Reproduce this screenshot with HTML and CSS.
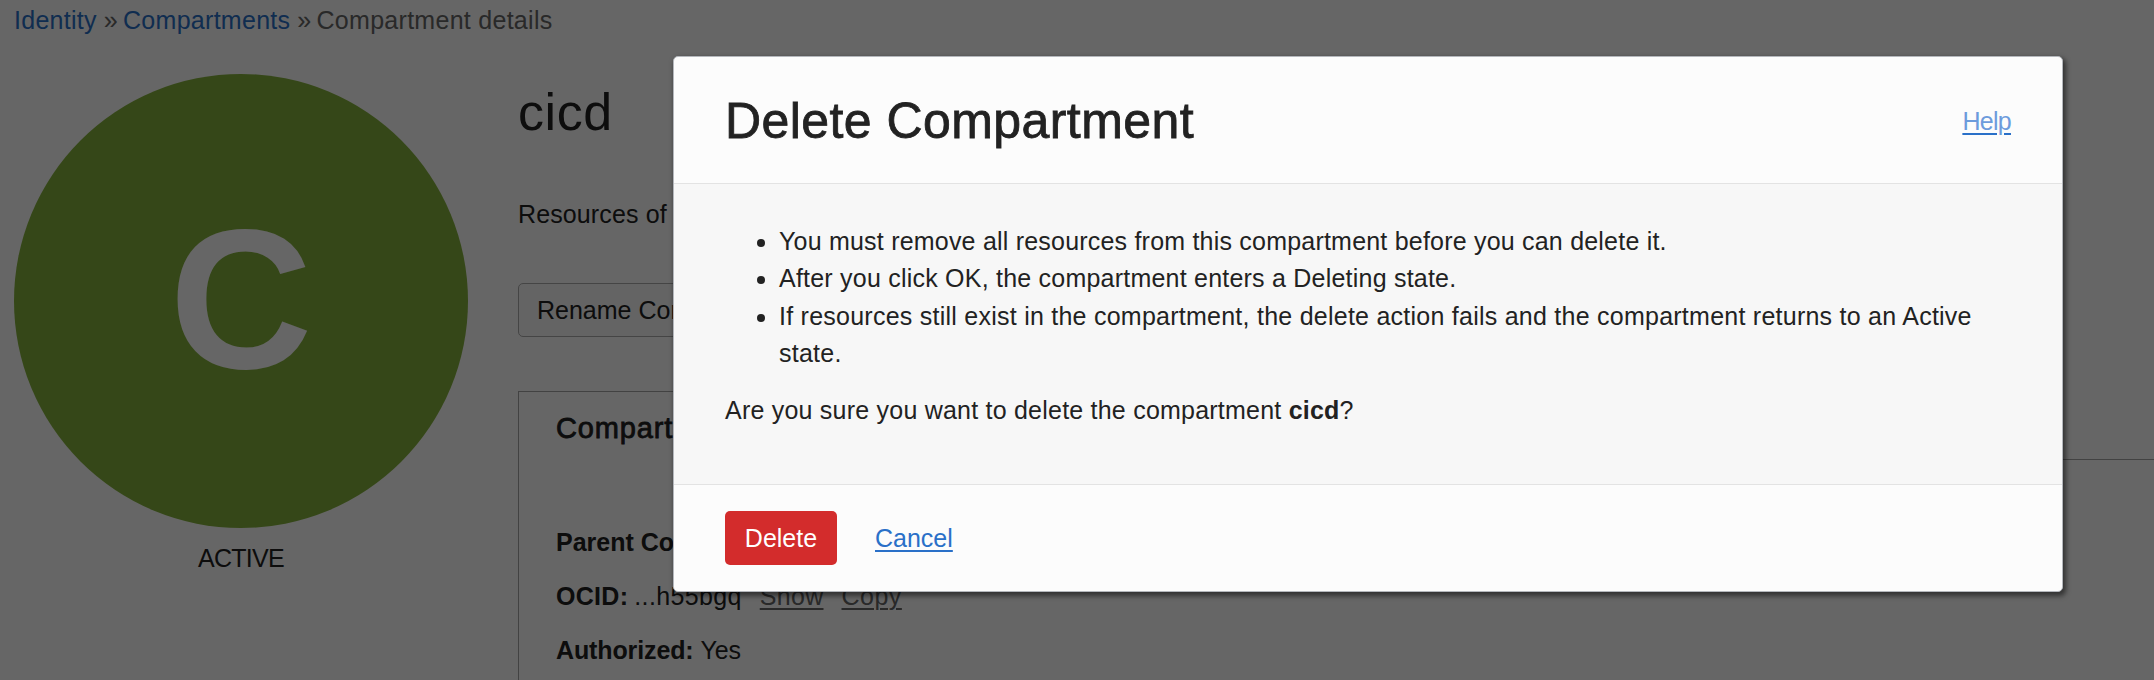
FILE: index.html
```html
<!DOCTYPE html>
<html lang="en">
<head>
<meta charset="utf-8">
<title>Compartment details</title>
<link rel="stylesheet" href="styles.css">
</head>
<body>
<div class="page">
  <nav class="breadcrumb"><a class="crumb" href="#">Identity</a><span class="sep">»</span><a class="crumb" href="#">Compartments</a><span class="sep">»</span><span class="current">Compartment details</span></nav>
  <div class="content">
    <aside class="status">
      <div class="avatar"><span class="avatar-letter">C</span></div>
      <div class="state">ACTIVE</div>
    </aside>
    <main class="details">
      <h1 class="name">cicd</h1>
      <p class="description">Resources of</p>
      <button class="rename">Rename Compartment</button>
      <section class="panel">
        <div class="tabs">
          <div class="tab">Compartment Information</div>
          <div class="tab-rest"></div>
        </div>
        <div class="fields">
          <div class="field"><b class="label-parent">Parent Compartment:</b></div>
          <div class="field"><b class="label-ocid">OCID:</b><span class="value-ocid">...h55bgq</span><a class="action show" href="#">Show</a><a class="action copy" href="#">Copy</a></div>
          <div class="field"><b class="label-auth">Authorized:</b><span class="value-auth">Yes</span></div>
        </div>
      </section>
    </main>
  </div>
</div>
<div class="overlay">
  <div class="modal" role="dialog" aria-modal="true">
    <header class="modal-header">
      <h2 class="modal-title">Delete Compartment</h2>
      <a class="help" href="#">Help</a>
    </header>
    <div class="modal-body">
      <ul class="notes">
        <li class="note-remove">You must remove all resources from this compartment before you can delete it.</li>
        <li class="note-state">After you click OK, the compartment enters a Deleting state.</li>
        <li class="note-fail">If resources still exist in the compartment, the delete action fails and the compartment returns to an Active<br>state.</li>
      </ul>
      <p class="confirm">Are you sure you want to delete the compartment <b>cicd</b>?</p>
    </div>
    <footer class="modal-footer">
      <button class="delete">Delete</button>
      <a class="cancel" href="#">Cancel</a>
    </footer>
  </div>
</div>
</body>
</html>
```
FILE: styles.css
```css
* { box-sizing: border-box; }
html, body { margin: 0; height: 680px; overflow: hidden; }
body {
  font-family: "Liberation Sans", Arial, sans-serif;
  font-size: 25px;
  line-height: 38px;
  color: #222;
  background: #fff;
  white-space: nowrap;
}
h1, h2, p, ul { margin: 0; padding: 0; font-weight: 400; }
button { font: inherit; margin: 0; }

.page { height: 680px; overflow: hidden; }
.breadcrumb { display: flex; padding: 1px 0 0 14px; height: 39px; color: #666; letter-spacing: .28px; }
.crumb { color: #2a70c8; text-decoration: none; }
.sep { margin: 0 5px 0 7px; }
.content { display: flex; padding: 35px 0 0 14px; }
.status { width: 454px; flex: none; text-align: center; }
.avatar {
  display: flex; align-items: center; justify-content: center;
  width: 454px; height: 454px; padding-bottom: 3px; border-radius: 50%;
  background: #85b23d; color: #fff;
}
.avatar-letter { font-size: 198px; font-weight: 700; line-height: 198px; }
.state { margin-top: 11px; letter-spacing: -.7px; }
.details { flex: 1; margin-left: 50px; }
.name { font-size: 52px; line-height: 60px; margin-top: 8px; letter-spacing: .6px; }
.description { margin-top: 53px; letter-spacing: .12px; }
.rename {
  display: block; width: 300px; height: 54px; margin-top: 50px; padding: 0 18px;
  text-align: left; color: #222; background: #f9f9f9;
  border: 1px solid #acacac; border-radius: 5px;
}
.panel { margin-top: 54px; }
.tabs { display: flex; height: 69px; }
.tab {
  width: 420px; padding: 17px 0 0 37px; font-size: 29px; letter-spacing: .85px;
  border: 1px solid #a5a5a5; border-bottom: 0; -webkit-text-stroke: .8px #222;
}
.tab-rest { flex: 1; border-bottom: 1px solid #a5a5a5; }
.fields { border-left: 1px solid #a5a5a5; padding: 55px 0 0 37px; height: 300px; }
.field { display: flex; height: 54px; line-height: 54px; }
.label-ocid { letter-spacing: .3px; }
.label-auth { letter-spacing: -.12px; }
.value-ocid { margin-left: 6px; letter-spacing: .35px; }
.value-auth { margin-left: 7px; letter-spacing: -.2px; }
.action { color: #666; margin-left: 18px; text-underline-offset: 3px; text-decoration-thickness: 2px; }
.show { letter-spacing: .3px; }
.copy { letter-spacing: .5px; }

.overlay { position: absolute; inset: 0; background: rgba(0, 0, 0, .6); padding: 56px 0 0 673px; }
.modal {
  width: 1390px; height: 536px; background: #fcfcfc;
  border: 1px solid #b4b7bc; border-radius: 5px;
  box-shadow: 2px 3px 5px 1px rgba(0, 0, 0, .5);
}
.modal-header {
  display: flex; justify-content: space-between; align-items: center;
  height: 127px; padding: 2px 51px 0; border-bottom: 1px solid #e3e3e3;
}
.modal-title { font-size: 50px; line-height: 60px; letter-spacing: .43px; -webkit-text-stroke: .8px #222; }
.help { color: #6c9bdc; letter-spacing: -.7px; text-decoration: underline #2a70c8 2px; text-underline-offset: 3px; }
.modal-body { height: 301px; padding: 38.8px 51px 0; background: #f7f7f7; border-bottom: 1px solid #e3e3e3; }
.notes { padding-left: 54px; line-height: 37.5px; }
.note-remove { letter-spacing: .208px; }
.note-state { letter-spacing: .22px; }
.note-fail { letter-spacing: .247px; }
.confirm { margin-top: 18.4px; letter-spacing: .22px; }
.modal-footer { display: flex; align-items: center; height: 107px; padding: 0 51px 2px; gap: 38px; }
.delete { width: 112px; height: 54px; padding: 0; border: 0; border-radius: 5px; background: #d32c2c; color: #fff; }
.cancel { color: #2a70c8; text-decoration-thickness: 2px; text-underline-offset: 3px; }
```
